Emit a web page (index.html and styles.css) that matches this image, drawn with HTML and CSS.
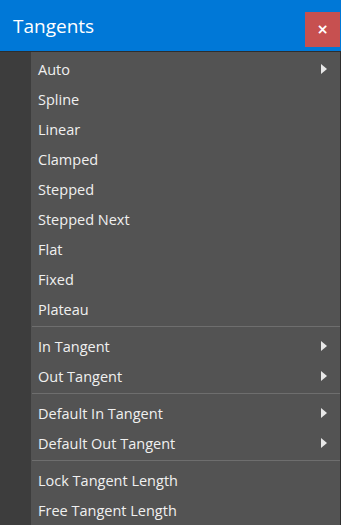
FILE: index.html
```html
<!DOCTYPE html>
<html lang="en">
<head>
<meta charset="UTF-8">
<meta name="viewport" content="width=device-width, initial-scale=1.0">
<title>Tangents</title>
<link rel="stylesheet" href="styles.css">
</head>
<body>

<div id="titlebar">
    <h1>Tangents</h1>
    <button id="close">&times;</button>
</div>

<div id="window-body">
    <div id="gutter"></div>
    <ul id="menu">
        <li class="item sub">Auto</li>
        <li class="item">Spline</li>
        <li class="item">Linear</li>
        <li class="item">Clamped</li>
        <li class="item">Stepped</li>
        <li class="item">Stepped Next</li>
        <li class="item">Flat</li>
        <li class="item">Fixed</li>
        <li class="item">Plateau</li>
        <li class="sep"></li>
        <li class="item sub">In Tangent</li>
        <li class="item sub">Out Tangent</li>
        <li class="sep"></li>
        <li class="item sub">Default In Tangent</li>
        <li class="item sub">Default Out Tangent</li>
        <li class="sep"></li>
        <li class="item">Lock Tangent Length</li>
        <li class="item">Free Tangent Length</li>
    </ul>
</div>

</body>
</html>
```

FILE: styles.css
```css
body {
    font-family: "Open Sans", "Noto Sans", sans-serif;
    margin: 0;
    padding: 0;
    background-color: #535353;
    overflow: hidden;
}
#titlebar {
    background-color: #0078d7;
    height: 51px;
    display: flex;
    justify-content: space-between;
    align-items: flex-start;
    padding-left: 13px;
    padding-right: 1px;
    box-sizing: border-box;
}
#titlebar h1 {
    margin: 0;
    margin-top: 12px;
    color: white;
    font-size: 19px;
    font-weight: normal;
    line-height: 28px;
}
#close {
    margin-top: 12px;
    width: 35px;
    height: 35px;
    border: none;
    padding: 0;
    background-color: #c75050;
    color: white;
    font-family: "DejaVu Sans", sans-serif;
    font-size: 14px;
    font-weight: bold;
    line-height: 35px;
}
#window-body {
    display: flex;
    border-top: 1px solid #2e2e2e;
}
#gutter {
    width: 31px;
    background-color: #3d3d3d;
}
#menu {
    flex: 1;
    list-style: none;
    margin: 0;
    padding: 3px 0 0 0;
    background-color: #535353;
    border-right: 1px solid #2e2e2e;
}
.item {
    height: 30px;
    line-height: 30px;
    padding-left: 7px;
    padding-right: 13px;
    color: #f0f0f0;
    font-size: 14.5px;
    display: flex;
    justify-content: space-between;
    align-items: center;
}
.sub::after {
    content: "";
    border-left: 6px solid #e8e8e8;
    border-top: 5px solid transparent;
    border-bottom: 5px solid transparent;
    margin-top: -3px;
}
.sep {
    height: 1px;
    background-color: #6e6e6e;
    margin: 1px 0 5px 1px;
}
```
